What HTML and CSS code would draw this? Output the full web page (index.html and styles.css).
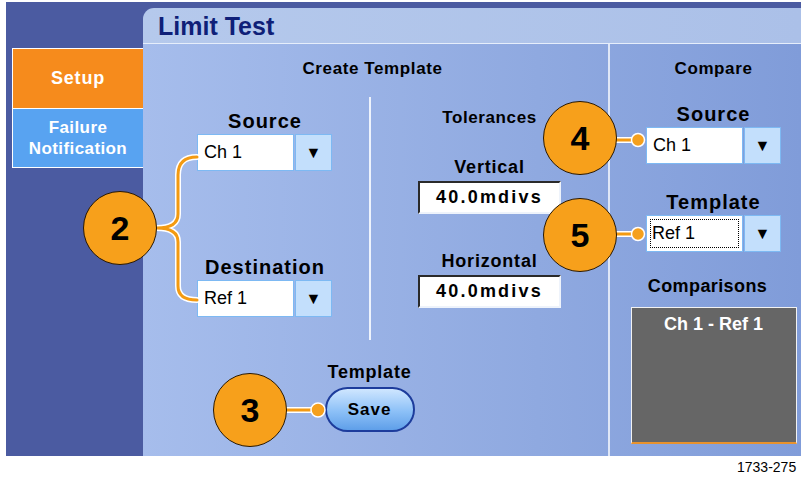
FILE: index.html
```html
<!DOCTYPE html>
<html lang="en">
<head>
    <meta charset="UTF-8">
    <meta name="viewport" content="width=device-width, initial-scale=1.0">
    <title>Limit Test</title>
    <link rel="stylesheet" href="styles.css">
</head>
<body>

<div class="frame">
    <div class="side">
        <div class="tab tab-on">Setup</div>
        <div class="tab">Failure<br>Notification</div>
    </div>

    <div class="panel">
        <div class="title">Limit Test</div>
        <div class="body">
            <div class="create">
                <div class="head">Create Template</div>
                <div class="cols">
                    <div class="col-left">
                        <div class="group">
                            <div class="lbl-big">Source</div>
                            <div class="drop">
                                <div class="drop-field">Ch 1</div>
                                <div class="drop-btn">&#9660;</div>
                            </div>
                        </div>
                        <div class="group group-dest">
                            <div class="lbl-big">Destination</div>
                            <div class="drop">
                                <div class="drop-field">Ref 1</div>
                                <div class="drop-btn">&#9660;</div>
                            </div>
                        </div>
                    </div>
                    <div class="col-right">
                        <div class="head">Tolerances</div>
                        <div class="lbl-mid lbl-vert">Vertical</div>
                        <div class="num-box">40.0mdivs</div>
                        <div class="lbl-mid lbl-horz">Horizontal</div>
                        <div class="num-box">40.0mdivs</div>
                    </div>
                </div>
                <div class="save-area">
                    <div class="lbl-mid">Template</div>
                    <div class="save-btn">Save</div>
                </div>
            </div>

            <div class="compare">
                <div class="head">Compare</div>
                <div class="lbl-big cmp-src">Source</div>
                <div class="drop">
                    <div class="drop-field">Ch 1</div>
                    <div class="drop-btn">&#9660;</div>
                </div>
                <div class="lbl-big cmp-tpl">Template</div>
                <div class="drop">
                    <div class="drop-field focus"><span>Ref 1</span></div>
                    <div class="drop-btn">&#9660;</div>
                </div>
                <div class="lbl-mid cmp-list">Comparisons</div>
                <div class="list-box">Ch 1 - Ref 1</div>
            </div>
        </div>
    </div>
</div>

<div class="fig-no">1733-275</div>

<!-- callouts drawn over the screen -->
<svg class="marks" width="801" height="479" viewBox="0 0 801 479">
    <g fill="none" stroke="#fff" stroke-width="6" stroke-linecap="round">
        <path d="M197,157 C184,157 178,163 178,175 L178,214 C178,223 172,228 157,228 C172,228 178,233 178,242 L178,286 C178,295 184,300 197,300"/>
        <path d="M616,140 L636,140"/>
        <path d="M616,234 L636,234"/>
        <path d="M287,410 L318,410"/>
    </g>
    <g fill="none" stroke="#f39a12" stroke-width="3" stroke-linecap="round">
        <path d="M197,157 C184,157 178,163 178,175 L178,214 C178,223 172,228 157,228 C172,228 178,233 178,242 L178,286 C178,295 184,300 197,300"/>
        <path d="M616,140 L636,140"/>
        <path d="M616,234 L636,234"/>
        <path d="M287,410 L318,410"/>
    </g>
    <g fill="#f5a01e" stroke="#fff" stroke-width="1.5">
        <circle cx="638" cy="140" r="6.5"/>
        <circle cx="638" cy="234" r="6.5"/>
        <circle cx="318" cy="410" r="7"/>
    </g>
</svg>
<div class="callout c2">2</div>
<div class="callout c3">3</div>
<div class="callout c4">4</div>
<div class="callout c5">5</div>

</body>
</html>
```

FILE: styles.css
```css
body {
    margin: 0;
    background-color: white;
    font-family: "Liberation Sans", Arial, sans-serif;
    position: relative;
    width: 801px;
    height: 479px;
    overflow: hidden;
}
.frame {
    margin: 2px 0 0 6px;
    height: 454px;
    box-sizing: border-box;
    padding-top: 6px;
    background-color: #4b5ba1;
    display: flex;
}
.side {
    width: 137px;
    padding: 40px 0 0 6px;
    box-sizing: border-box;
}
.tab {
    height: 60px;
    box-sizing: border-box;
    border: 1.5px solid white;
    border-right: none;
    background-color: #58a3f1;
    color: white;
    font-weight: bold;
    font-size: 17px;
    line-height: 21px;
    letter-spacing: 0.4px;
    display: flex;
    align-items: center;
    justify-content: center;
    text-align: center;
}
.tab-on {
    background-color: #f68b1c;
    border-bottom: none;
    font-size: 18px;
    letter-spacing: 0.8px;
}
.panel {
    flex: 1;
    display: flex;
    flex-direction: column;
    border-radius: 11px 0 0 0;
    overflow: hidden;
}
.title {
    height: 35px;
    line-height: 36px;
    padding-left: 15px;
    background: linear-gradient(to right, #b5c9ec, #abc0e8);
    border-bottom: 1px solid #e6eefb;
    color: #0f1f78;
    font-size: 25px;
    font-weight: bold;
}
.body {
    flex: 1;
    display: flex;
    background: linear-gradient(to right, #a6bdec, #8fa9e0 60%, #809cd9);
}
.head {
    font-size: 17px;
    font-weight: bold;
    line-height: 20px;
    letter-spacing: 0.6px;
    color: black;
}
.lbl-big {
    font-size: 20px;
    font-weight: bold;
    line-height: 24px;
    letter-spacing: 1px;
    text-align: center;
}
.lbl-mid {
    font-size: 18px;
    font-weight: bold;
    line-height: 20px;
    letter-spacing: 0.8px;
    text-align: center;
}
.create {
    width: 467px;
    box-sizing: border-box;
    border-right: 2px solid #dfe7f7;
    padding-top: 15px;
}
.create > .head {
    text-align: center;
    padding-right: 6px;
}
.cols {
    display: flex;
    margin-top: 18px;
}
.col-left {
    width: 228px;
    height: 243px;
    box-sizing: border-box;
    border-right: 2px solid #eef3fc;
    padding: 12px 0 0 54px;
}
.group {
    width: 136px;
}
.group-dest {
    margin-top: 84px;
}
.drop {
    display: flex;
    gap: 1px;
    margin-top: 1px;
    height: 37px;
}
.drop-field {
    width: 97px;
    box-sizing: border-box;
    background-color: white;
    border: 1px solid #7db9f3;
    font-size: 18px;
    padding-left: 6px;
    display: flex;
    align-items: center;
}
.drop-btn {
    width: 37px;
    box-sizing: border-box;
    background-color: #c3dffc;
    border: 1px solid #7db9f3;
    font-size: 16px;
    display: flex;
    align-items: center;
    justify-content: center;
}
.focus {
    padding: 3px;
}
.focus span {
    flex: 1;
    height: 100%;
    box-sizing: border-box;
    border: 1px dotted black;
    display: flex;
    align-items: center;
    padding-left: 1px;
}
.col-right {
    flex: 1;
    padding-top: 11px;
    display: flex;
    flex-direction: column;
    align-items: center;
}
.lbl-vert {
    margin-top: 29px;
}
.lbl-horz {
    margin-top: 37px;
}
.num-box {
    margin-top: 4px;
    width: 143px;
    height: 33px;
    box-sizing: border-box;
    background-color: white;
    border: 2px solid;
    border-color: #2a2a2a #eef3fb #eef3fb #2a2a2a;
    font-size: 18px;
    font-weight: bold;
    letter-spacing: 2.2px;
    display: flex;
    align-items: center;
    justify-content: center;
}
.save-area {
    margin-top: 22px;
    padding-right: 12px;
    display: flex;
    flex-direction: column;
    align-items: center;
}
.save-btn {
    margin-top: 5px;
    width: 90px;
    height: 45px;
    box-sizing: border-box;
    border: 2px solid #1d3c9c;
    border-radius: 23px;
    background: linear-gradient(#cfe6ff, #8cc0f7 55%, #5f9fe9);
    font-size: 17px;
    font-weight: bold;
    letter-spacing: 1px;
    display: flex;
    align-items: center;
    justify-content: center;
}
.compare {
    flex: 1;
    padding: 15px 0 0 16px;
    display: flex;
    flex-direction: column;
    align-items: center;
}
.cmp-src {
    margin-top: 23px;
}
.cmp-tpl {
    margin-top: 26px;
}
.cmp-list {
    margin-top: 24px;
    font-size: 18px;
    letter-spacing: 0.4px;
    padding-right: 12px;
}
.list-box {
    margin-top: 11px;
    width: 166px;
    height: 137px;
    box-sizing: border-box;
    background-color: #666666;
    border: 1px solid #f2f2f2;
    border-bottom: 2px solid #e8922c;
    color: white;
    font-size: 18px;
    font-weight: bold;
    text-align: center;
    padding-top: 6px;
}
.fig-no {
    padding-left: 737px;
    line-height: 22px;
    font-size: 14px;
    white-space: nowrap;
}
.marks {
    position: absolute;
    left: 0;
    top: 0;
}
.callout {
    position: absolute;
    width: 74px;
    height: 74px;
    box-sizing: border-box;
    border-radius: 50%;
    border: 1.5px solid #2a1800;
    background-color: #f7a01b;
    font-size: 34px;
    font-weight: bold;
    display: flex;
    align-items: center;
    justify-content: center;
}
.c2 { left: 83px; top: 191px; }
.c3 { left: 213px; top: 373px; }
.c4 { left: 543px; top: 101px; }
.c5 { left: 543px; top: 198px; }
```
